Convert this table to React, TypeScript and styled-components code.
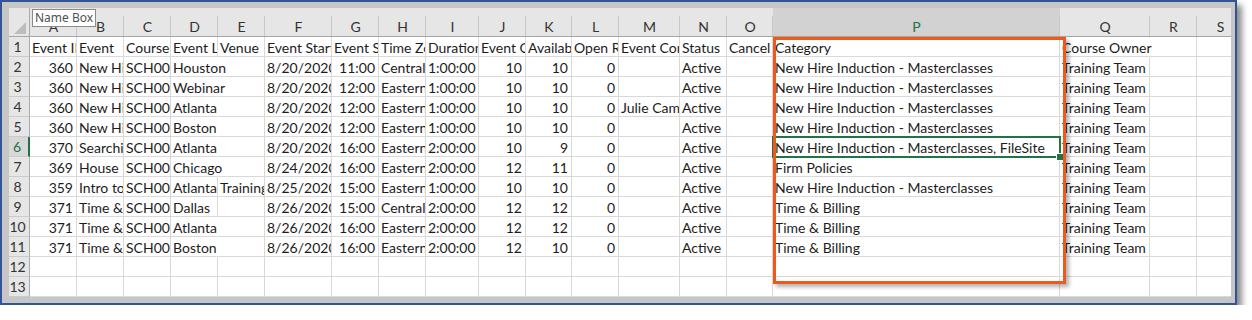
import React from 'react';
import styled, { createGlobalStyle } from 'styled-components';

const GREEN = '#217346';
const FONT = 'Lato, "Liberation Sans", sans-serif';
const FONT_SIZE = 14;

const GlobalStyle = createGlobalStyle`
  html, body {
    margin: 0;
    padding: 0;
    background: #fff;
  }
  body {
    font-family: ${FONT};
  }
`;

const letters = ['A', 'B', 'C', 'D', 'E', 'F', 'G', 'H', 'I', 'J', 'K', 'L', 'M', 'N', 'O', 'P', 'Q', 'R', 'S'];
const widths = [47, 47, 47, 47, 47, 67, 47, 47, 53, 47, 46, 47, 61, 47, 46, 287, 90, 47, 47];
const SELECTED_COL = 15;
const SELECTED_ROW = 6;

const NHI = 'New Hire Induction - Masterclasses';
const TB = 'Time & Billing';
const TT = 'Training Team';

const data: string[][] = [
  ['Event ID', 'Event', 'Course ID', 'Event Location', 'Venue', 'Event Start Date', 'Event Start Time', 'Time Zone', 'Duration', 'Event Capacity', 'Available Seats', 'Open Requests', 'Event Contact', 'Status', 'Cancel', 'Category', 'Course Owner', '', ''],
  ['360', 'New Hire Induction', 'SCH0001', 'Houston', '', '8/20/2020', '11:00', 'Central', '1:00:00', '10', '10', '0', '', 'Active', '', NHI, TT, '', ''],
  ['360', 'New Hire Induction', 'SCH0001', 'Webinar', '', '8/20/2020', '12:00', 'Eastern', '1:00:00', '10', '10', '0', '', 'Active', '', NHI, TT, '', ''],
  ['360', 'New Hire Induction', 'SCH0001', 'Atlanta', '', '8/20/2020', '12:00', 'Eastern', '1:00:00', '10', '10', '0', 'Julie Campbell', 'Active', '', NHI, TT, '', ''],
  ['360', 'New Hire Induction', 'SCH0001', 'Boston', '', '8/20/2020', '12:00', 'Eastern', '1:00:00', '10', '10', '0', '', 'Active', '', NHI, TT, '', ''],
  ['370', 'Searching in FileSite', 'SCH0002', 'Atlanta', '', '8/20/2020', '16:00', 'Eastern', '2:00:00', '10', '9', '0', '', 'Active', '', NHI + ', FileSite', TT, '', ''],
  ['369', "House 'Rules'", 'SCH0003', 'Chicago', '', '8/24/2020', '16:00', 'Eastern', '2:00:00', '12', '11', '0', '', 'Active', '', 'Firm Policies', TT, '', ''],
  ['359', 'Intro to the Firm', 'SCH0004', 'Atlanta', 'Training Room', '8/25/2020', '15:00', 'Eastern', '1:00:00', '10', '10', '0', '', 'Active', '', NHI, TT, '', ''],
  ['371', 'Time & Billing', 'SCH0005', 'Dallas', '', '8/26/2020', '15:00', 'Central', '2:00:00', '12', '12', '0', '', 'Active', '', TB, TT, '', ''],
  ['371', 'Time & Billing', 'SCH0005', 'Atlanta', '', '8/26/2020', '16:00', 'Eastern', '2:00:00', '12', '12', '0', '', 'Active', '', TB, TT, '', ''],
  ['371', 'Time & Billing', 'SCH0005', 'Boston', '', '8/26/2020', '16:00', 'Eastern', '2:00:00', '12', '10', '0', '', 'Active', '', TB, TT, '', ''],
  Array(19).fill(''),
  Array(19).fill(''),
];

let ctx: CanvasRenderingContext2D | null = null;
const textWidth = (t: string) => {
  if (!ctx) {
    ctx = document.createElement('canvas').getContext('2d');
    if (ctx) ctx.font = `${FONT_SIZE}px Lato`;
  }
  return ctx ? ctx.measureText(t).width : t.length * 7;
};

const isNumeric = (t: string) => /^[\d:]+$/.test(t);

const Frame = styled.div`
  width: 1237px;
  box-sizing: border-box;
  border: 2px solid #2f5597;
  background: #c6c6c6;
  padding: 6px 6px 6px 7px;
  box-shadow: 5px 5px 6px rgba(0, 0, 0, 0.45);
`;

const Sheet = styled.div`
  position: relative;
  width: 1222px;
  height: 289px;
  overflow: hidden;
  background: #fff;
  font-family: ${FONT};
  font-size: ${FONT_SIZE}px;
  color: #1c1c1c;
`;

const Row = styled.div<{ $head?: boolean }>`
  display: flex;
  height: ${(p) => (p.$head ? 29 : 20)}px;
`;

const Corner = styled.div`
  width: 21px;
  flex: none;
  box-sizing: border-box;
  display: flex;
  align-items: flex-end;
  justify-content: flex-end;
  padding: 0 3px 2px 0;
  background: #e6e6e6;
  border-right: 1px solid #ababab;
  border-bottom: 1px solid #a6a6a6;
`;

const Triangle = styled.div`
  width: 12px;
  height: 12px;
  background: #bdbdbd;
  clip-path: polygon(100% 0, 100% 100%, 0 100%);
`;

const ColHead = styled.div<{ $w: number; $sel?: boolean }>`
  width: ${(p) => p.$w}px;
  flex: none;
  box-sizing: border-box;
  display: flex;
  align-items: flex-end;
  justify-content: center;
  line-height: 18px;
  color: ${(p) => (p.$sel ? GREEN : '#333')};
  background:
    linear-gradient(#c8c8c8, #c8c8c8) right bottom / 1px 20px no-repeat,
    ${(p) => (p.$sel ? '#d2d2d2' : '#e6e6e6')};
  border-bottom: 1px solid #a6a6a6;
`;

const RowHead = styled.div<{ $sel?: boolean }>`
  width: 21px;
  flex: none;
  box-sizing: border-box;
  padding-right: 3px;
  text-align: center;
  line-height: 20px;
  color: ${(p) => (p.$sel ? GREEN : '#333')};
  background: ${(p) => (p.$sel ? '#d8d8d8' : '#e6e6e6')};
  border-bottom: 1px solid #cbcbcb;
  border-right: ${(p) => (p.$sel ? `2px solid ${GREEN}` : '1px solid #ababab')};
`;

const Cell = styled.div<{ $w: number; $right?: boolean; $spill?: boolean }>`
  width: ${(p) => p.$w}px;
  flex: none;
  box-sizing: border-box;
  position: relative;
  z-index: ${(p) => (p.$spill ? 1 : 0)};
  padding: 1px ${(p) => (p.$right ? 3 : 2)}px 0 2px;
  line-height: 19px;
  white-space: nowrap;
  overflow: ${(p) => (p.$spill ? 'visible' : 'hidden')};
  text-align: ${(p) => (p.$right ? 'right' : 'left')};
  border-bottom: 1px solid #d9d9d9;
  border-right: 1px solid ${(p) => (p.$spill ? 'transparent' : '#d9d9d9')};
`;

const NameTip = styled.div`
  position: absolute;
  left: 23px;
  top: 1px;
  z-index: 5;
  padding: 0 2px;
  height: 16px;
  line-height: 16px;
  background: #fff;
  border: 1px solid #8a8a8a;
  font-family: "Noto Sans", "Liberation Sans", sans-serif;
  font-size: 12px;
  color: #505050;
`;

const Highlight = styled.div`
  position: absolute;
  left: 764px;
  top: 29px;
  width: 293px;
  height: 247px;
  box-sizing: border-box;
  border: 3px solid #ef5a1c;
  box-shadow: 3px 3px 4px rgba(0, 0, 0, 0.3);
  z-index: 4;
  pointer-events: none;
`;

const Selection = styled.div`
  position: absolute;
  left: 763px;
  top: 128px;
  width: 289px;
  height: 22px;
  box-sizing: border-box;
  border: 2px solid ${GREEN};
  z-index: 3;
`;

const FillHandle = styled.div`
  position: absolute;
  right: -5px;
  bottom: -5px;
  width: 6px;
  height: 6px;
  background: ${GREEN};
  border: 1px solid #fff;
`;

export default function App() {
  return (
    <>
      <GlobalStyle />
      <Frame>
        <Sheet>
          <Row $head>
            <Corner>
              <Triangle />
            </Corner>
            {letters.map((l, i) => (
              <ColHead key={l} $w={widths[i]} $sel={i === SELECTED_COL}>
                {l}
              </ColHead>
            ))}
          </Row>
          {data.map((cells, r) => (
            <Row key={r}>
              <RowHead $sel={r + 1 === SELECTED_ROW}>{r + 1}</RowHead>
              {cells.map((text, c) => {
                const right = isNumeric(text);
                const nextEmpty = c + 1 < cells.length && cells[c + 1] === '';
                const spill = !!text && !right && nextEmpty && textWidth(text) > widths[c] - 4;
                return (
                  <Cell key={c} $w={widths[c]} $right={right} $spill={spill}>
                    {text}
                  </Cell>
                );
              })}
            </Row>
          ))}
          <NameTip>Name Box</NameTip>
          <Selection>
            <FillHandle />
          </Selection>
          <Highlight />
        </Sheet>
      </Frame>
    </>
  );
}
